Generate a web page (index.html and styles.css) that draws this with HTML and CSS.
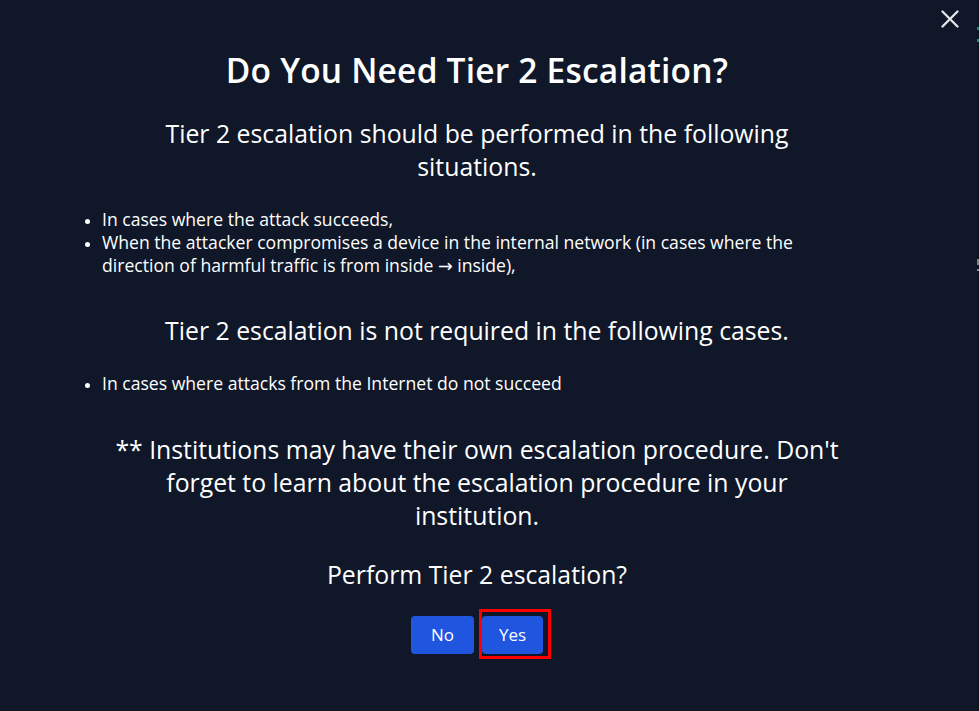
FILE: index.html
```html
<!DOCTYPE html>
<html lang="en">
<head>
<meta charset="utf-8">
<title>Tier 2 Escalation</title>
<link rel="stylesheet" href="styles.css">
</head>
<body>
<div class="modal">
  <button class="close" aria-label="Close">
    <svg width="18" height="18" viewBox="0 0 18 18"><path d="M1.5 1.5 L16.5 16.5 M16.5 1.5 L1.5 16.5" stroke="#e5e7eb" stroke-width="2.3" stroke-linecap="round" fill="none"/></svg>
  </button>
  <h1 class="title">Do You Need Tier 2 Escalation?</h1>
  <p class="lead first">Tier 2 escalation should be performed in the following situations.</p>
  <ul class="cases first-list">
    <li>In cases where the attack succeeds,</li>
    <li>When the attacker compromises a device in the internal network (in cases where the direction of harmful traffic is from inside → inside),</li>
  </ul>
  <p class="lead second">Tier 2 escalation is not required in the following cases.</p>
  <ul class="cases second-list">
    <li>In cases where attacks from the Internet do not succeed</li>
  </ul>
  <p class="lead note">** Institutions may have their own escalation procedure. Don't forget to learn about the escalation procedure in your institution.</p>
  <p class="lead question">Perform Tier 2 escalation?</p>
  <div class="actions">
    <button class="btn btn-no">No</button>
    <span class="yes-wrap">
      <button class="btn btn-yes">Yes</button>
      <span class="highlight"></span>
    </span>
  </div>
</div>
<div class="edge">
  <span class="mark mark-a"></span>
  <span class="mark mark-b"></span>
  <span class="mark mark-c"></span>
  <span class="mark mark-d"></span>
</div>
</body>
</html>
```
FILE: styles.css
```css
html, body {
  margin: 0;
  padding: 0;
  background: #0f1728;
  height: 100%;
  overflow: hidden;
}
body {
  font-family: "Open Sans", "Noto Sans", sans-serif;
  color: #ffffff;
}
.modal {
  position: relative;
  width: 954px;
  padding-top: 50px;
}
.close {
  position: absolute;
  top: 10px;
  left: 941px;
  width: 18px;
  height: 18px;
  padding: 0;
  border: 0;
  background: transparent;
  line-height: 0;
}
.title {
  margin: 0;
  text-align: center;
  font-size: 33.5px;
  font-weight: 600;
  line-height: 40px;
  letter-spacing: 0.2px;
}
.lead {
  width: 740px;
  margin: 0 auto;
  text-align: center;
  font-size: 24.8px;
  line-height: 33.5px;
  font-weight: 400;
}
.lead.first { margin-top: 26.5px; }
.lead.second { margin-top: 37px; }
.lead.note { margin-top: 38.5px; line-height: 33px; }
.lead.question { margin-top: 26px; }
.cases {
  margin: 0 0 0 62px;
  width: 728px;
  padding: 0 0 0 40px;
  font-family: "Open Sans", "DejaVu Sans", sans-serif;
  font-size: 17.6px;
  line-height: 23px;
}
.cases li::marker { font-size: 15px; }
.first-list { margin-top: 24px; }
.second-list { margin-top: 24.7px; }
.actions {
  margin-top: 24px;
  display: flex;
  justify-content: center;
  gap: 8px;
}
.btn {
  height: 38px;
  padding: 0;
  border: 0;
  border-radius: 4px;
  background: #1f55df;
  color: #ffffff;
  font-family: "Open Sans", "Noto Sans", sans-serif;
  font-size: 17px;
}
.btn-no { width: 63px; }
.btn-yes { width: 61px; }
.yes-wrap {
  position: relative;
  display: block;
}
.highlight {
  position: absolute;
  left: -3px;
  top: -7px;
  width: 66px;
  height: 44px;
  border: 3px solid #ff0000;
}
.edge {
  position: absolute;
  top: 0;
  right: 0;
  width: 2px;
  height: 711px;
  background: #0b1220;
}
.mark {
  position: absolute;
  left: 0;
  width: 2px;
  height: 3px;
}
.mark-a { top: 27px; background: #1d8a7a; }
.mark-b { top: 39px; background: #1d8a7a; }
.mark-c { top: 259px; height: 6px; background: #8a7f80; }
.mark-d { top: 269px; height: 2px; background: #8a8f99; }
```
